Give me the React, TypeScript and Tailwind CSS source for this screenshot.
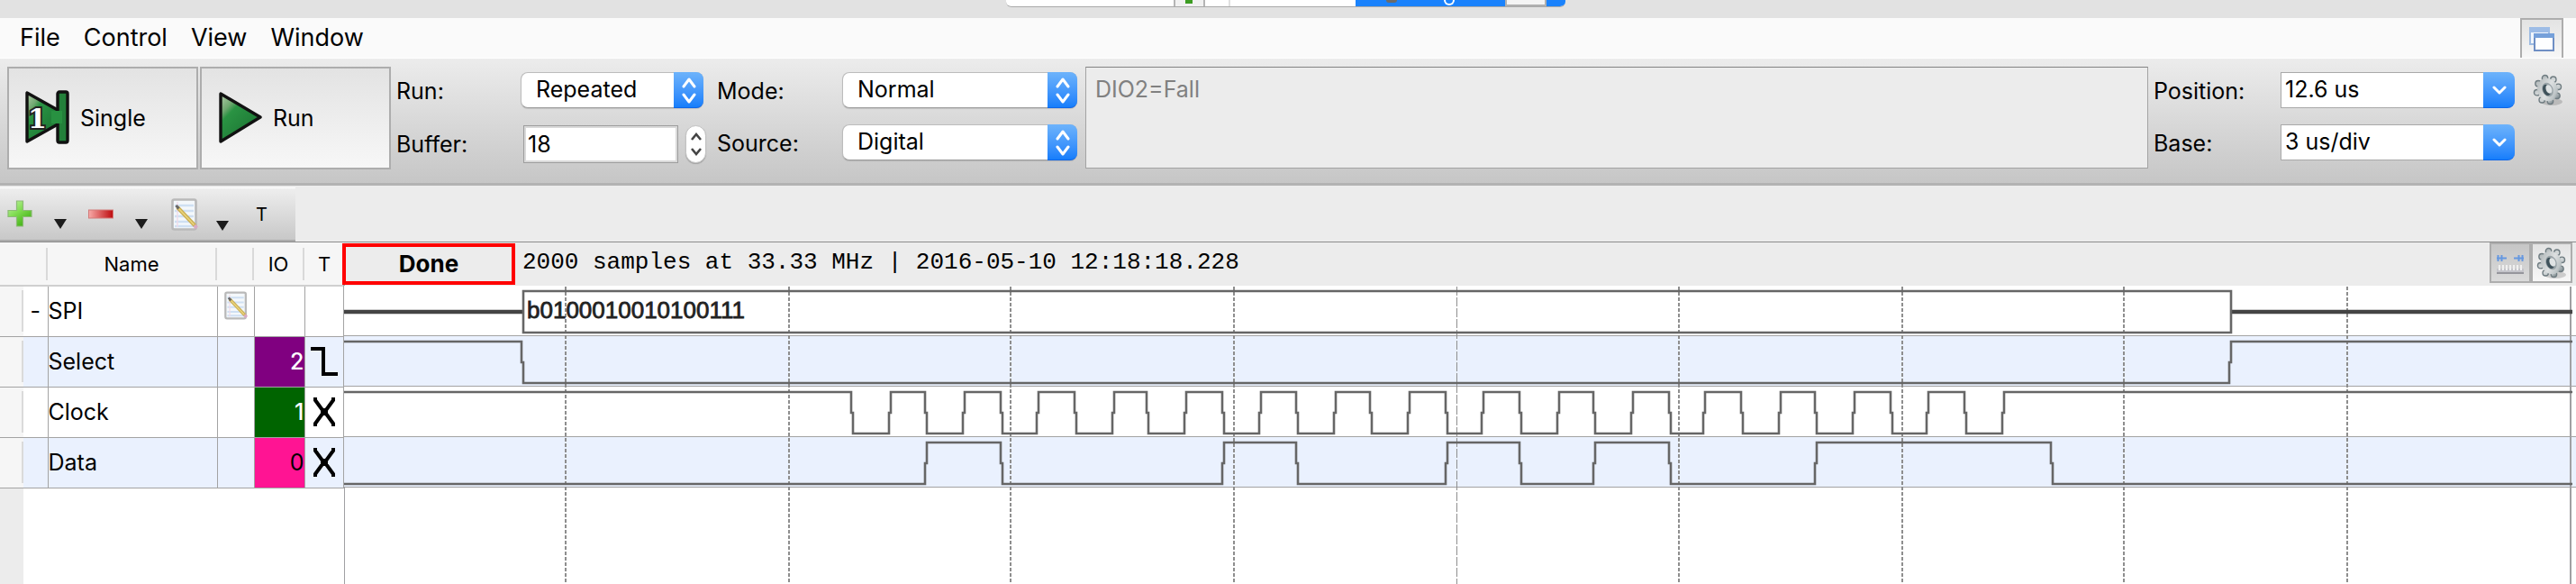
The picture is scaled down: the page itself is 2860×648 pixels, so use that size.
import { useId, type ReactNode } from "react";

const UI = "font-['Inter','Noto_Sans',sans-serif]";

const clockEdges = [
  946, 988, 1028, 1070, 1112, 1152, 1194, 1236, 1274, 1316, 1358, 1399, 1440, 1482, 1522, 1564, 1606, 1646, 1688, 1730,
  1770, 1812, 1854, 1892, 1934, 1976, 2016, 2058, 2100, 2140, 2182, 2224,
];
const dataEdges = [1028, 1112, 1358, 1440, 1606, 1688, 1770, 1854, 2016, 2278];
const selectEdges = [580, 2476];
const gridLines = [628, 876, 1122, 1370, 1864, 2112, 2358, 2606];
const TRACE_LEFT = 382;
const TRACE_END = 2856;

function tracePath(edges: number[], startHigh: boolean, top: number) {
  const bottom = top + 46;
  const mid = top + 23;
  let high = startHigh;
  let d = `M0 ${high ? top : bottom}`;
  for (const edge of edges) {
    const x = edge - TRACE_LEFT;
    const from = high ? top : bottom;
    const to = high ? bottom : top;
    d += `H${x - 1}V${from}V${mid}L${x + 1} ${mid}V${to}`;
    high = !high;
  }
  return `${d}H${TRACE_END - TRACE_LEFT}`;
}

function Gear({ className }: { className: string }) {
  const id = useId();
  const teeth = [0, 45, 90, 135, 180, 225, 270, 315];
  return (
    <svg viewBox="0 0 34 36" className={className} aria-hidden="true">
      <defs>
        <linearGradient id={id} gradientUnits="userSpaceOnUse" x1="4" y1="4" x2="29" y2="32">
          <stop offset="0" stopColor="#aab1b3" />
          <stop offset="0.5" stopColor="#dde0e1" />
          <stop offset="0.75" stopColor="#bcc3c5" />
          <stop offset="1" stopColor="#4d5d65" />
        </linearGradient>
      </defs>
      <ellipse cx="21" cy="31" rx="12" ry="4" fill="#000" opacity="0.16" />
      <g stroke="#6f7c81" strokeWidth="1.4">
        {teeth.map((a) => {
          const rad = ((a - 14) * Math.PI) / 180;
          return <circle key={a} cx={16.5 + 12.2 * Math.cos(rad)} cy={17.5 + 13.2 * Math.sin(rad)} r="3.2" fill={`url(#${id})`} />;
        })}
      </g>
      <g transform="rotate(-22 16.500 17.500)">
        <ellipse cx="16.500" cy="17.500" rx="11.200" ry="13" fill={`url(#${id})`} />
        <ellipse cx="16.500" cy="17.500" rx="6" ry="8" fill="#9aa4a8" />
        <ellipse cx="15.500" cy="17.500" rx="4.200" ry="6.400" fill="#3f525b" />
        <ellipse cx="18" cy="17.500" rx="3.200" ry="5" fill="#dfe3e4" />
      </g>
    </svg>
  );
}

function Notepad({ className }: { className: string }) {
  return (
    <svg viewBox="0 0 30 36" className={className} aria-hidden="true">
      <rect x="1.5" y="1.5" width="26" height="33" rx="2" fill="#f4f8fb" stroke="#b9b9b9" strokeWidth="2.6" />
      <path d="M4 8h21M4 14h21M4 20h21M4 26h21M4 31h21" stroke="#cfe0f3" strokeWidth="2.4" />
      <path d="M7 4v28" stroke="#f0dbe8" strokeWidth="1.4" />
      <path d="M7 10L27 31" stroke="#c9ad52" strokeWidth="4.2" />
      <path d="M7.500 10.500L25.500 29.500" stroke="#ead47c" strokeWidth="1.800" />
      <path d="M5.500 8l3 3.400" stroke="#666" strokeWidth="3" />
      <path d="M26 30l2.500 3" stroke="#d9a9c4" strokeWidth="4" />
    </svg>
  );
}

function MenuArrow() {
  return (
    <svg viewBox="0 0 14 11" className="h-[11px] w-[14px] shrink-0" aria-hidden="true">
      <path d="M0 0h14L7 11z" fill="#1c1c1c" />
    </svg>
  );
}

const blue = "bg-linear-to-b from-[#6db3fb] to-[#157efb]";

function PopupSelect({ label, value, width, labelWidth }: { label: string; value: string; width: string; labelWidth: string }) {
  const id = useId();
  return (
    <div className="flex h-10 items-center">
      <label htmlFor={id} className={`${labelWidth} shrink-0 pt-0.5`}>
        {label}
      </label>
      <div className={`relative h-10 ${width} shrink-0`}>
        <select
          id={id}
          defaultValue={value}
          className="h-10 w-full appearance-none rounded-lg border border-[#bcbcbc] border-b-[#9c9c9c] bg-white pb-0.5 pl-4 shadow-[0_1px_1px_rgba(0,0,0,0.12)]"
        >
          <option>{value}</option>
        </select>
        <span className={`pointer-events-none absolute top-0 right-0 flex h-10 w-[33px] items-center justify-center rounded-r-lg border-b border-[#0f66e8] ${blue}`}>
          <svg viewBox="0 0 16 30" className="h-[30px] w-4" fill="none" stroke="#fff" strokeWidth="3" strokeLinecap="round" strokeLinejoin="round" aria-hidden="true">
            <path d="M2 11l6-8 6 8M2 20l6 8 6-8" />
          </svg>
        </span>
      </div>
    </div>
  );
}

function ComboBox({ label, value }: { label: string; value: string }) {
  const id = useId();
  return (
    <div className="flex h-10 items-center">
      <label htmlFor={id} className="w-[141px] shrink-0 pt-0.5">
        {label}
      </label>
      <div className="flex h-10 w-[260px] shrink-0">
        <input id={id} defaultValue={value} className="h-10 min-w-0 flex-1 border border-r-0 border-[#a9a9a9] bg-white pb-0.5 pl-1" />
        <button type="button" aria-label={`${label} list`} className={`flex w-[35px] items-center justify-center rounded-r-lg border-b border-[#0f66e8] ${blue}`}>
          <svg viewBox="0 0 16 10" className="h-[10px] w-4" fill="none" stroke="#fff" strokeWidth="3" strokeLinecap="round" strokeLinejoin="round" aria-hidden="true">
            <path d="M2 2l6 6 6-6" />
          </svg>
        </button>
      </div>
    </div>
  );
}

function RunButton({ label, children }: { label: string; children: ReactNode }) {
  return (
    <button type="button" className="flex h-[114px] w-[212px] items-center gap-3 border-2 border-[#adadad] bg-linear-to-b from-[#e3e3e3] to-[#f7f7f7] pb-0.5 pl-[17px]">
      {children}
      <span className="pt-0.5">{label}</span>
    </button>
  );
}

function GreenDefs({ id }: { id: string }) {
  return (
    <defs>
      <linearGradient id={id} x1="0" y1="0" x2="0.6" y2="0.7">
        <stop offset="0" stopColor="#b4cdab" />
        <stop offset="0.35" stopColor="#6fa770" />
        <stop offset="0.5" stopColor="#2a9343" />
        <stop offset="1" stopColor="#218039" />
      </linearGradient>
    </defs>
  );
}

function DontCare() {
  return (
    <svg viewBox="0 0 24 32" className="h-8 w-6" aria-label="Ignore" role="img">
      <path d="M2 0v3l8 11v4L2 29v3M22 0v3l-8 11v4l8 11v3M12 12v8" fill="none" stroke="#000" strokeWidth="4" />
    </svg>
  );
}

function FallEdge() {
  return (
    <svg viewBox="0 0 30 32" className="h-8 w-[30px]" aria-label="Falling edge" role="img">
      <path d="M0 2h14v28h16" fill="none" stroke="#000" strokeWidth="4" />
    </svg>
  );
}

type Row = { name: string; io?: string; ioStyle: string; icon?: ReactNode; trigger?: ReactNode; shade: string; sign?: string };

const rows: Row[] = [
  { name: "SPI", ioStyle: "", icon: <Notepad className="mx-auto mb-3 h-8 w-[26px]" />, shade: "bg-white", sign: "-" },
  { name: "Select", io: "2", ioStyle: "bg-[#800080] text-white font-medium", trigger: <FallEdge />, shade: "bg-[#eaf1fe]" },
  { name: "Clock", io: "1", ioStyle: "bg-[#006400] text-white font-medium", trigger: <DontCare />, shade: "bg-white" },
  { name: "Data", io: "0", ioStyle: "bg-[#ff1493] text-black", trigger: <DontCare />, shade: "bg-[#eaf1fe]" },
];

const headings = ["Name", "", "IO", "T"];

function ChannelTable() {
  return (
    <table className="w-[382px] table-fixed border-collapse text-left">
      <colgroup>
        <col className="w-[26px]" />
        <col className="w-[27px]" />
        <col className="w-[188px]" />
        <col className="w-[41px]" />
        <col className="w-[56px]" />
        <col className="w-[44px]" />
      </colgroup>
      <thead>
        <tr className="h-12 border-b-2 border-[#cfcfcf] bg-[#f6f6f6] text-[22px]">
          <td colSpan={2} className="p-0">
            <div className="h-9 border-r-2 border-[#d9d9d9]" />
          </td>
          {headings.map((h, i) => (
            <th key={i} className="p-0 font-normal">
              <div className={`flex h-9 items-center justify-center ${h === "T" ? "" : "border-r-2 border-[#d9d9d9]"}`}>{h}</div>
            </th>
          ))}
        </tr>
      </thead>
      <tbody>
        {rows.map((r) => (
          <tr key={r.name} className={`h-14 border-b border-[#a3a3a3] ${r.shade}`}>
            <td className="bg-[#f6f6f6] p-0">
              <div className="h-[46px] border-r-2 border-[#dadada]" />
            </td>
            <td className="border-r border-[#a3a3a3] p-0 text-center">{r.sign}</td>
            <td className="border-r border-[#a3a3a3] p-0">{r.name}</td>
            <td className="border-r border-[#a3a3a3] p-0">{r.icon}</td>
            <td className={`border-r border-[#a3a3a3] p-0 text-right ${r.ioStyle}`}>{r.io}</td>
            <td className="border-r-2 border-[#a3a3a3] p-0">
              <span className="flex justify-center">{r.trigger}</span>
            </td>
          </tr>
        ))}
      </tbody>
    </table>
  );
}

function Traces() {
  return (
    <div className="relative min-w-0 flex-1 overflow-hidden bg-white">
      <div className="flex flex-col">
        {rows.map((r) => (
          <div key={r.name} className={`h-14 border-b border-[#a3a3a3] ${r.shade}`} />
        ))}
      </div>
      <svg width="2478" height="331" viewBox="0 0 2478 331" className="absolute top-0 left-0" aria-label="Digital waveforms" role="img">
        <g stroke="#8e8e8e">
          {gridLines.map((x) => (
            <path key={x} d={`M${x - TRACE_LEFT} 1V331`} strokeDasharray="4 2" strokeWidth="2" />
          ))}
          <path d="M1235.500 1V331" strokeDasharray="10 2" />
          <path d="M0 223V331M2472 1V331" stroke="#a0a0a3" strokeWidth="2" />
        </g>
        <g fill="none" stroke="#666" strokeWidth="2.6">
          <path d="M0 29H199M2095 29H2474" stroke="#444" strokeWidth="4.400" />
          <path d="M199 6H2095V52H199z" />
          <path d={tracePath(selectEdges, true, 62)} />
          <path d={tracePath(clockEdges, true, 118)} />
          <path d={tracePath(dataEdges, false, 174)} />
        </g>
        <text x="203" y="36" fontSize="26" fill="#222" stroke="#222" strokeWidth="0.8" fontFamily="Liberation Sans, Arial, sans-serif">
          b0100010010100111
        </text>
      </svg>
    </div>
  );
}

export default function App() {
  const single = useId();
  const run = useId();
  const minus = useId();
  const plus = useId();
  const buffer = useId();
  return (
    <div className={`flex min-h-screen w-full flex-col overflow-hidden bg-[#ececec] text-[25px] leading-8 text-black ${UI}`}>
      <div className="flex h-5 justify-center bg-[#e2e2e2] pr-1.5">
        <div className="flex h-2 w-[621px] justify-end overflow-hidden rounded-b-md border-b border-[#a9a9a9] bg-white">
          <div className="flex w-[35px] justify-center border-x-2 border-[#b5b5b5] bg-[#f1f1f1]">
            <span className="h-1 w-2 bg-[#3c9c22]" />
          </div>
          <div className="ml-[26px] w-[141px] border-l-2 border-[#e0e0e0]" />
          <div className="flex w-[233px] justify-end bg-[#1a82fc] pr-[21px]">
            <span className="mr-[52px] h-[3px] w-3 rounded-b-full bg-[#6b6b6b]" />
            <span className="mr-[56px] h-[6px] w-3 rounded-b-full border-2 border-t-0 border-white" />
            <div className="w-[46px] border-2 border-t-0 border-[#b0b0b0] bg-[#f4f4f4]" />
          </div>
        </div>
      </div>

      <nav className="flex h-11 items-center bg-[#fafafa] pr-3.5 pl-[22px] text-[27px]">
        <div className="flex flex-1 gap-[26px]">
          <button type="button">File</button>
          <button type="button">Control</button>
          <button type="button">View</button>
          <button type="button">Window</button>
        </div>
        <button type="button" aria-label="Windows" className="flex h-11 w-12 items-center justify-center border-2 border-b-0 border-[#adadad] bg-linear-to-b from-[#e3e3e3] to-[#f7f7f7]">
          <svg viewBox="0 0 28 27" className="h-[27px] w-7" aria-hidden="true">
            <rect x="1" y="1" width="21" height="18" fill="#f1f6fc" stroke="#9cbae2" strokeWidth="2" />
            <rect x="0" y="0" width="23" height="6" rx="1" fill="#9dbce6" />
            <rect x="6" y="9" width="21" height="17" fill="#fdfeff" stroke="#6f8fc4" strokeWidth="2" />
            <rect x="5" y="7" width="23" height="5" fill="#75a0da" />
          </svg>
        </button>
      </nav>

      <section className="flex h-[142px] items-start border-t border-b-3 border-t-white border-b-[#b2b2b2] bg-linear-to-b from-[#ececec] to-[#c6c6c6] pt-[9px] pl-2">
        <div className="flex gap-0.5">
          <RunButton label="Single">
            <svg viewBox="0 0 50 64" className="h-16 w-[50px]" aria-hidden="true">
              <GreenDefs id={single} />
              <path d="M3 5v54l34-19V24z" fill={`url(#${single})`} stroke="#111" strokeWidth="3.400" strokeLinejoin="round" />
              <rect x="37" y="4" width="11" height="56" rx="2" fill="#23803a" stroke="#111" strokeWidth="3.400" />
              <path d="M30 25h12v14H30z" fill="#289141" />
              <text x="4" y="44" fontSize="30" fontWeight="700" fill="#fff" stroke="#222" strokeWidth="4" paintOrder="stroke" fontFamily="DejaVu Serif, serif">
                1
              </text>
            </svg>
          </RunButton>
          <RunButton label="Run">
            <svg viewBox="0 0 50 64" className="h-16 w-[50px]" aria-hidden="true">
              <GreenDefs id={run} />
              <path d="M4 6v53l44-27z" fill={`url(#${run})`} stroke="#111" strokeWidth="3.400" strokeLinejoin="round" />
            </svg>
          </RunButton>
        </div>

        <div className="flex flex-col gap-[18px] pt-1.5 pl-1.5">
          <PopupSelect label="Run:" value="Repeated" width="w-[203px]" labelWidth="w-[138px]" />
          <div className="flex h-11 items-center">
            <label htmlFor={buffer} className="w-[141px] shrink-0">
              Buffer:
            </label>
            <input id={buffer} defaultValue="18" className="h-[42px] w-[172px] border border-[#9d9d9d] bg-white pl-1 shadow-[inset_0_0_0_2px_#d9d9d9]" />
            <button type="button" aria-label="Step buffer" className="ml-2 flex h-[42px] w-[23px] items-center justify-center rounded-xl border border-[#c2c2c2] bg-white shadow-[0_1px_1px_rgba(0,0,0,0.2)]">
              <svg viewBox="0 0 12 26" className="h-[26px] w-3" fill="none" stroke="#444" strokeWidth="2.600" aria-hidden="true">
                <path d="M1 8l5-6 5 6M1 18l5 6 5-6" />
              </svg>
            </button>
          </div>
        </div>

        <div className="flex flex-col gap-[18px] pt-1.5 pl-3">
          <PopupSelect label="Mode:" value="Normal" width="w-[261px]" labelWidth="w-[139px]" />
          <PopupSelect label="Source:" value="Digital" width="w-[261px]" labelWidth="w-[139px]" />
        </div>

        <textarea aria-label="Trigger" readOnly defaultValue="DIO2=Fall" className="ml-[9px] h-[113px] min-w-0 flex-1 resize-none border border-[#a3a3a3] border-t-[#828282] bg-[#ececec] px-2.5 py-2 text-[#808080]" />

        <div className="flex flex-col gap-[18px] pt-1.5 pl-1.5">
          <ComboBox label="Position:" value="12.6 us" />
          <ComboBox label="Base:" value="3 us/div" />
        </div>
        <button type="button" aria-label="Settings" className="mt-2 mr-3.5 ml-5">
          <Gear className="h-9 w-[34px]" />
        </button>
      </section>

      <div className="flex h-[62px] pt-0.5">
        <div className="flex w-[328px] items-center border-t border-b-2 border-t-white border-b-[#ababab] bg-linear-to-b from-[#eeeeee] to-[#c8c8c8] pl-2">
          <button type="button" aria-label="Add" className="flex w-[90px] items-end gap-6">
            <svg viewBox="0 0 28 32" className="h-8 w-7" aria-hidden="true">
              <defs>
                <linearGradient id={plus} x1="0" y1="0" x2="0.7" y2="1">
                  <stop offset="0" stopColor="#c4f5a6" />
                  <stop offset="0.5" stopColor="#7fdb50" />
                  <stop offset="1" stopColor="#3fae12" />
                </linearGradient>
              </defs>
              <path d="M10.500 1h7v10.500H27v7h-9.500V29h-7V18.500H1v-7h9.500z" fill={`url(#${plus})`} stroke="#8cba76" strokeWidth="1.200" />
            </svg>
            <MenuArrow />
          </button>
          <button type="button" aria-label="Remove" className="flex h-8 w-[92px] items-end gap-6">
            <svg viewBox="0 0 28 32" className="h-8 w-7" aria-hidden="true">
              <defs>
                <linearGradient id={minus}>
                  <stop offset="0" stopColor="#f7a9a7" />
                  <stop offset="1" stopColor="#bd0a0d" />
                </linearGradient>
              </defs>
              <rect x="0.500" y="11" width="27" height="9" fill={`url(#${minus})`} stroke="#d27a78" />
            </svg>
            <MenuArrow />
          </button>
          <button type="button" aria-label="Edit" className="flex w-[94px] items-end gap-5">
            <Notepad className="h-9 w-[30px]" />
            <MenuArrow />
          </button>
          <button type="button" className="text-[20px]">T</button>
        </div>
      </div>

      <section className="flex flex-1 border-t border-[#8c8c8c]">
        <div className="flex w-[382px] shrink-0 flex-col">
          <ChannelTable />
          <div className="flex-1 pl-[26px]">
            <div className="h-full bg-white" />
          </div>
        </div>
        <div className="flex min-w-0 flex-1 flex-col">
          <div className="flex h-12 items-start font-['Liberation_Mono',monospace] text-[26px]">
            <div className={`z-10 -ml-0.5 mt-px flex h-[46px] w-[192px] shrink-0 items-center justify-center border-4 border-[#f00] bg-[#ececec] font-bold ${UI}`}>Done</div>
            <p className="flex-1 pt-1.5 pl-2 whitespace-pre">2000 samples at 33.33 MHz | 2016-05-10 12:18:18.228</p>
            <button type="button" aria-label="Fit view" className="flex h-[45px] w-[46px] items-center justify-center border-2 border-[#adadad] bg-linear-to-b from-[#c6c6c6] to-[#dadada]">
              <svg viewBox="0 0 30 22" className="mt-1 h-[22px] w-[30px]" aria-hidden="true">
                <path d="M1.500 0v7M5.500 0v7M0 3.500h11M28.500 0v7M24.500 0v7M30 3.500H19" stroke="#6698e0" strokeWidth="2" />
                <path d="M0 15h30v6H0z" fill="#c4c4ca" />
                <path d="M3 11v6M7 11v6M11 11v6M15 11v6M19 11v6M23 11v6M27 11v6" stroke="#f0f0f0" strokeWidth="2" />
                <path d="M0 20h30" stroke="#96969c" strokeWidth="2" />
              </svg>
            </button>
            <button type="button" aria-label="View settings" className="mr-1 flex h-[45px] w-[46px] items-center justify-center border-2 border-[#adadad] bg-linear-to-b from-[#e3e3e3] to-[#f7f7f7]">
              <Gear className="h-9 w-[34px]" />
            </button>
          </div>
          <Traces />
        </div>
      </section>
    </div>
  );
}
